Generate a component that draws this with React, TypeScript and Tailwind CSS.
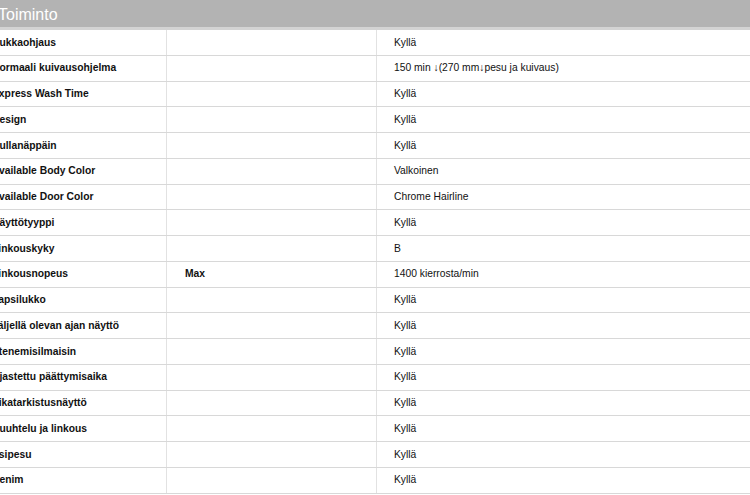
const rows: [string, string, string][] = [
  ['Kukkaohjaus', '', 'Kyllä'],
  ['Normaali kuivausohjelma', '', '150 min ↓(270 mm↓pesu ja kuivaus)'],
  ['Express Wash Time', '', 'Kyllä'],
  ['Design', '', 'Kyllä'],
  ['Kullanäppäin', '', 'Kyllä'],
  ['Available Body Color', '', 'Valkoinen'],
  ['Available Door Color', '', 'Chrome Hairline'],
  ['Näyttötyyppi', '', 'Kyllä'],
  ['Linkouskyky', '', 'B'],
  ['Linkousnopeus', 'Max', '1400 kierrosta/min'],
  ['Lapsilukko', '', 'Kyllä'],
  ['Jäljellä olevan ajan näyttö', '', 'Kyllä'],
  ['Etenemisilmaisin', '', 'Kyllä'],
  ['Ajastettu päättymisaika', '', 'Kyllä'],
  ['Vikatarkistusnäyttö', '', 'Kyllä'],
  ['Huuhtelu ja linkous', '', 'Kyllä'],
  ['Esipesu', '', 'Kyllä'],
  ['Denim', '', 'Kyllä'],
];

export default function App() {
  return (
    <div
      className="w-[750px] h-[495px] overflow-hidden bg-white text-[#111]"
      style={{ fontFamily: '"Liberation Sans", Arial, sans-serif' }}
    >
      <div className="ml-[-26px]">
        <div className="h-[30px] bg-[#b3b3b3] border-b-[3px] border-[#d3d3d3] flex items-center pl-[24px] pt-[2px]">
          <span className="text-white text-[16px] leading-none">Toiminto</span>
        </div>
        {rows.map(([label, sub, value]) => (
          <div
            key={label}
            className="grid grid-cols-[193px_210px_1fr] h-[25.75px] border-b border-[#d8d8d8] text-[10.3px]"
          >
            <div className="flex items-center pl-[18px] font-bold border-r border-[#e2e2e2]">{label}</div>
            <div className="flex items-center pl-[18px] font-bold border-r border-[#e2e2e2]">{sub}</div>
            <div className="flex items-center pl-[17px]">{value}</div>
          </div>
        ))}
      </div>
    </div>
  );
}
